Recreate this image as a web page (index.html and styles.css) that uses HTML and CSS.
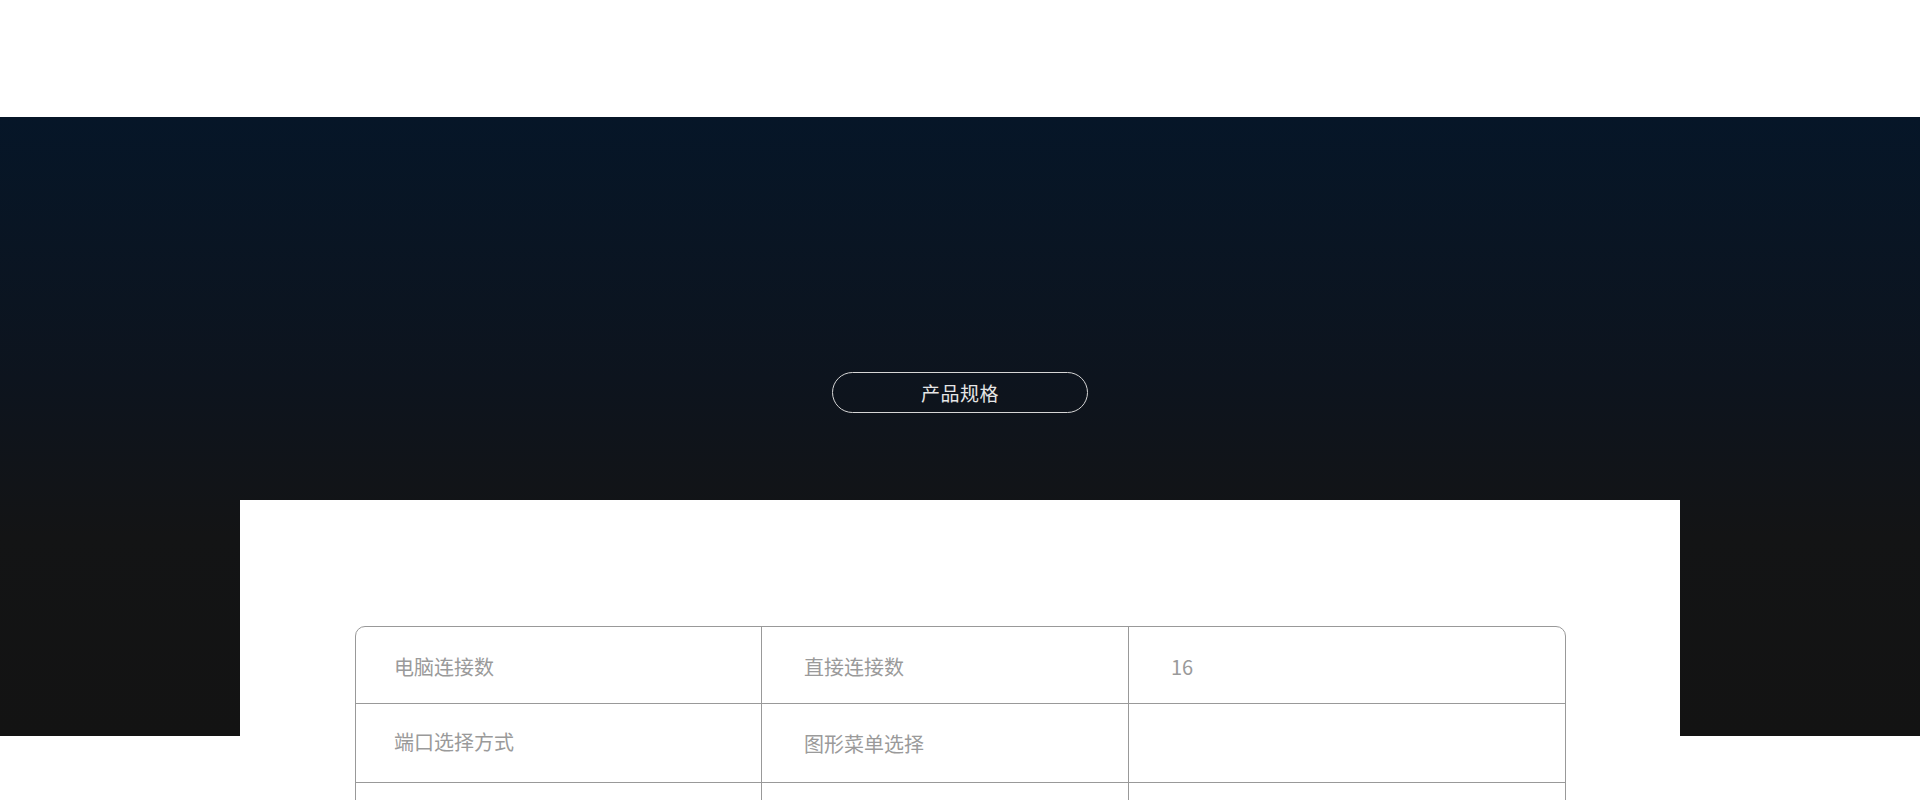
FILE: index.html
```html
<!DOCTYPE html>
<html lang="zh-CN">
<head>
  <meta charset="UTF-8">
  <title>产品规格</title>
  <meta name="viewport" content="width=device-width, initial-scale=1.0">
  <link rel="stylesheet" href="styles.css">
</head>
<body>

<div class="top-bar"></div>

<section class="specs">
  <div class="specs-title">
    <span class="pill">产品规格</span>
  </div>

  <div class="card">
    <table class="spec-table">
      <tr class="row-first">
        <td class="col-name">电脑连接数</td>
        <td class="col-sub">直接连接数</td>
        <td class="col-val">16</td>
      </tr>
      <tr class="row-second">
        <td class="col-name">端口选择方式</td>
        <td class="col-sub">图形菜单选择</td>
        <td class="col-val"></td>
      </tr>
      <tr>
        <td class="col-name">控制端</td>
        <td class="col-sub">本地控制端</td>
        <td class="col-val">1</td>
      </tr>
      <tr>
        <td class="col-name">分辨率</td>
        <td class="col-sub">最大分辨率</td>
        <td class="col-val">1920 x 1200</td>
      </tr>
    </table>
  </div>
</section>

</body>
</html>
```

FILE: styles.css
```css
body {
  margin: 0;
  font-family: "Noto Sans CJK SC", "Noto Sans", sans-serif;
  background-color: #fff;
  color: #999;
}

.top-bar {
  height: 117px;
  background: #fff;
}

.specs {
  padding-top: 255px;
  background: linear-gradient(180deg, #061628 0, #0d141e 260px, #131415 420px, #131313 619px) top / 100% 619px no-repeat;
}

.specs-title {
  text-align: center;
}

.pill {
  display: inline-block;
  box-sizing: border-box;
  width: 256px;
  height: 41px;
  line-height: 39px;
  border: 1px solid #d6d6d6;
  border-radius: 21px;
  color: #e6e6e6;
  font-size: 19px;
  font-weight: 400;
  letter-spacing: 0.5px;
}

.card {
  width: 1440px;
  margin: 87px auto 0;
  box-sizing: border-box;
  padding: 126px 114px 80px 115px;
  background: #fff;
}

.spec-table {
  width: 100%;
  border-collapse: separate;
  border-spacing: 0;
  border: 1px solid #999;
  border-radius: 10px;
  font-size: 20px;
  color: #9a9a9a;
}

.spec-table td {
  height: 77px;
  box-sizing: border-box;
  border-bottom: 1px solid #999;
  border-right: 1px solid #999;
  vertical-align: middle;
  padding: 0;
}

.spec-table tr:last-child td {
  border-bottom: none;
}

.spec-table td:last-child {
  border-right: none;
}

.col-name {
  width: 406px;
  padding-left: 38px !important;
}

.col-sub {
  width: 367px;
  padding-left: 42px !important;
}

.col-val {
  padding-left: 42px !important;
}

.row-first td {
  padding-top: 2px !important;
}

.row-second td {
  height: 79px;
}

.row-second .col-name {
  padding-bottom: 3px !important;
}
```
